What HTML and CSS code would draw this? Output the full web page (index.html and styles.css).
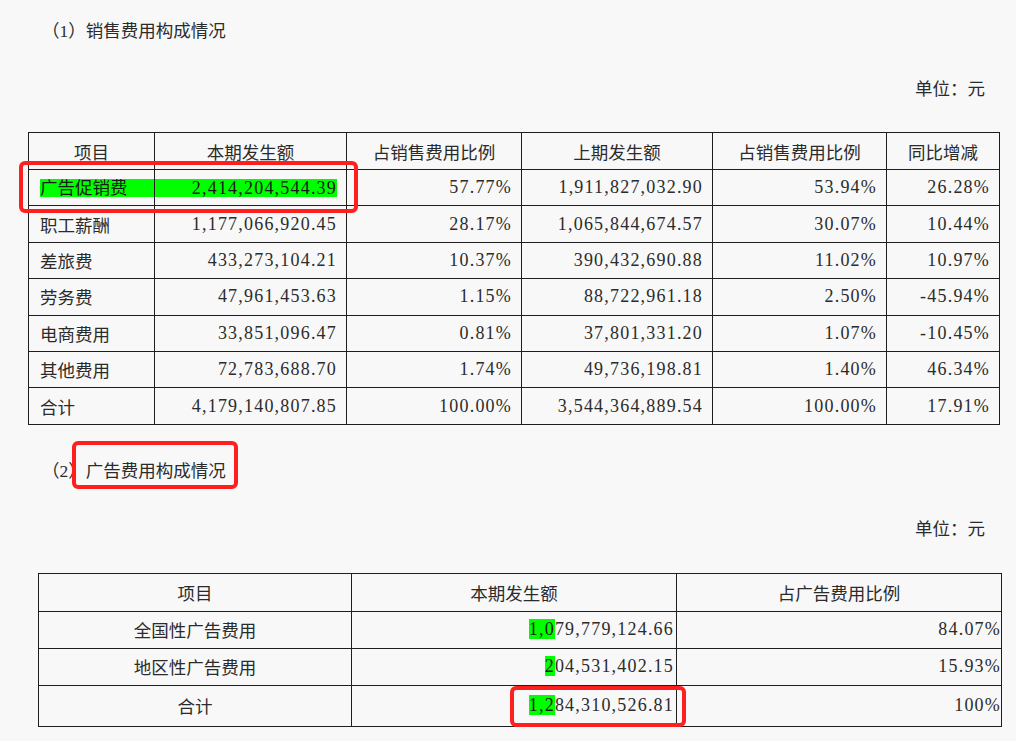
FILE: index.html
```html
<!DOCTYPE html>
<html lang="zh-CN">
<head>
<meta charset="utf-8">
<title>销售费用构成情况</title>
<link rel="stylesheet" href="styles.css">
</head>
<body>
<div class="page">
  <p class="title t1">（1）销售费用构成情况</p>
  <p class="unit u1">单位：元</p>
  <table class="tbl tbl1">
    <colgroup>
      <col class="c1"><col class="c2"><col class="c3"><col class="c4"><col class="c5"><col class="c6">
    </colgroup>
    <thead>
      <tr><th>项目</th><th>本期发生额</th><th>占销售费用比例</th><th>上期发生额</th><th>占销售费用比例</th><th>同比增减</th></tr>
    </thead>
    <tbody>
      <tr class="hlrow"><td class="lbl hlcell-l"><span class="hlblock">广告促销费</span></td><td class="num hlcell-r"><span class="hlblock">2,414,204,544.39</span></td><td class="num">57.77%</td><td class="num">1,911,827,032.90</td><td class="num">53.94%</td><td class="num">26.28%</td></tr>
      <tr><td class="lbl">职工薪酬</td><td class="num">1,177,066,920.45</td><td class="num">28.17%</td><td class="num">1,065,844,674.57</td><td class="num">30.07%</td><td class="num">10.44%</td></tr>
      <tr><td class="lbl">差旅费</td><td class="num">433,273,104.21</td><td class="num">10.37%</td><td class="num">390,432,690.88</td><td class="num">11.02%</td><td class="num">10.97%</td></tr>
      <tr><td class="lbl">劳务费</td><td class="num">47,961,453.63</td><td class="num">1.15%</td><td class="num">88,722,961.18</td><td class="num">2.50%</td><td class="num">-45.94%</td></tr>
      <tr><td class="lbl">电商费用</td><td class="num">33,851,096.47</td><td class="num">0.81%</td><td class="num">37,801,331.20</td><td class="num">1.07%</td><td class="num">-10.45%</td></tr>
      <tr><td class="lbl">其他费用</td><td class="num">72,783,688.70</td><td class="num">1.74%</td><td class="num">49,736,198.81</td><td class="num">1.40%</td><td class="num">46.34%</td></tr>
      <tr><td class="lbl">合计</td><td class="num">4,179,140,807.85</td><td class="num">100.00%</td><td class="num">3,544,364,889.54</td><td class="num">100.00%</td><td class="num">17.91%</td></tr>
    </tbody>
  </table>

  <p class="title t2">（2）广告费用构成情况</p>
  <p class="unit u2">单位：元</p>
  <table class="tbl tbl2">
    <colgroup>
      <col class="d1"><col class="d2"><col class="d3">
    </colgroup>
    <thead>
      <tr><th>项目</th><th>本期发生额</th><th>占广告费用比例</th></tr>
    </thead>
    <tbody>
      <tr><td class="ctr">全国性广告费用</td><td class="num2"><span class="hl">1,0</span>79,779,124.66</td><td class="num3">84.07%</td></tr>
      <tr><td class="ctr">地区性广告费用</td><td class="num2"><span class="hl">2</span>04,531,402.15</td><td class="num3">15.93%</td></tr>
      <tr class="last"><td class="ctr">合计</td><td class="num2"><span class="hl">1,2</span>84,310,526.81</td><td class="num3">100%</td></tr>
    </tbody>
  </table>

  <div class="mark m1"></div>
  <div class="mark m2"></div>
  <div class="mark m3"></div>
</div>
</body>
</html>
```

FILE: styles.css
```css
html, body {
  margin: 0;
  padding: 0;
  background: #f8f8f8;
}
body {
  font-family: "Liberation Serif", "Noto Sans CJK SC", serif;
  font-size: 17.5px;
  color: #2b2b2b;
}
.page {
  position: relative;
  width: 1016px;
  height: 741px;
  overflow: hidden;
}
.title {
  margin: 0;
  padding-left: 47px;
  line-height: 24px;
}
.t1 { padding-top: 19px; padding-left: 42px; }
.t2 { padding-top: 34px; padding-left: 42px; }
.unit {
  margin: 0;
  text-align: right;
  padding-right: 31px;
  line-height: 24px;
}
.u1 { padding-top: 34px; }
.u2 { padding-top: 34px; }

.tbl {
  border-collapse: collapse;
  table-layout: fixed;
  border: 1.5px solid #1e1e1e;
}
.tbl th, .tbl td {
  border: 1.5px solid #1e1e1e;
  padding: 0;
  font-weight: normal;
  white-space: nowrap;
}
.tbl th { text-align: center; }

.tbl1 {
  margin-left: 28px;
  margin-top: 31px;
  width: 971px;
}
.c1 { width: 126px; }
.c2 { width: 192px; }
.c3 { width: 175px; }
.c4 { width: 191px; }
.c5 { width: 174px; }
.c6 { width: 113px; }
.tbl1 tr { height: 36.4px; }
.tbl1 thead tr { height: 37px; }
.tbl1 .lbl {
  padding-left: 11px;
  text-align: left;
}
.tbl1 .num {
  text-align: right;
  padding-right: 9px;
  font-size: 18px;
  letter-spacing: 1.2px;
}
.tbl1 .hlcell-l { padding-left: 11px; padding-right: 0; }
.tbl1 .hlcell-r { padding-left: 0; padding-right: 9px; }
.hlblock {
  display: block;
  background: #00ff00;
  line-height: 18px;
  color: #1a1a1a;
}

.tbl2 {
  margin-left: 38px;
  margin-top: 32px;
  width: 963px;
}
.d1 { width: 313px; }
.d2 { width: 325px; }
.d3 { width: 325px; }
.tbl2 thead tr { height: 38px; }
.tbl2 tbody tr { height: 37px; }
.tbl2 tbody tr.last { height: 41px; }
.tbl2 .ctr { text-align: center; }
.tbl2 .num2 {
  text-align: right;
  padding-right: 2px;
  font-size: 18px;
  letter-spacing: 1.2px;
}
.tbl2 .num3 {
  text-align: right;
  padding-right: 0;
  font-size: 18px;
  letter-spacing: 1.2px;
}
.hl {
  background: #00ff00;
  color: #1a1a1a;
}

.mark {
  position: absolute;
  border: 4px solid #ff1f1f;
  border-radius: 6px;
  box-sizing: border-box;
}
.m1 { left: 19px; top: 161px; width: 339px; height: 52px; }
.m2 { left: 72px; top: 441px; width: 166px; height: 48px; }
.m3 { left: 510px; top: 686px; width: 176px; height: 41px; }
```
